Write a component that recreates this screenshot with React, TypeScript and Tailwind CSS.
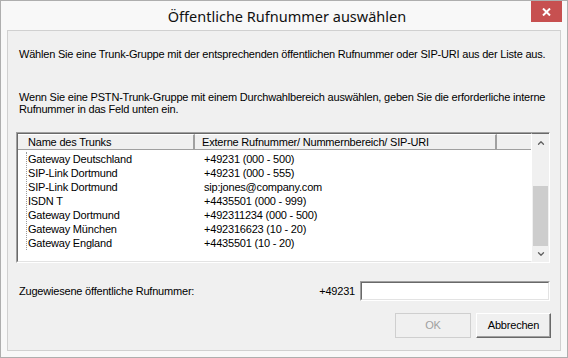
import { ChevronDown, ChevronUp } from "lucide-react";

const trunks = [
  { name: "Gateway Deutschland", number: "+49231 (000 - 500)" },
  { name: "SIP-Link Dortmund", number: "+49231 (000 - 555)" },
  { name: "SIP-Link Dortmund", number: "sip:jones@company.com" },
  { name: "ISDN T", number: "+4435501 (000 - 999)" },
  { name: "Gateway Dortmund", number: "+492311234 (000 - 500)" },
  { name: "Gateway München", number: "+492316623 (10 - 20)" },
  { name: "Gateway England", number: "+4435501 (10 - 20)" },
];

export default function App() {
  return (
    <div className="w-[568px] h-[358px] bg-[#f8f8f8] border border-[#aeaeae] flex flex-col relative font-['Liberation_Sans',Arial,sans-serif] text-[11px] tracking-[-0.2px] text-black overflow-hidden">
      {/* Titelleiste */}
      <div className="h-[29px] flex items-center justify-center">
        <span className="font-['Noto_Sans',sans-serif] text-[14.5px] tracking-normal text-[#111] pl-[6px] pt-[2px]">
          Öffentliche Rufnummer auswählen
        </span>
      </div>
      <div className="absolute top-0 right-[5px] w-[31px] h-[21px] bg-[#c75050] flex items-center justify-center">
        <svg width="9" height="8" viewBox="0 0 9 8">
          <path d="M1 0.5 L8 7.5 M8 0.5 L1 7.5" stroke="white" strokeWidth="2" />
        </svg>
      </div>

      {/* Inhalt */}
      <div className="mx-[6px] h-[321px] bg-[#f0f0f0] border border-[#d0d0d0] flex flex-col">
        <p className="mt-[17px] ml-[11px] leading-[13px] whitespace-nowrap">
          Wählen Sie eine Trunk-Gruppe mit der entsprechenden öffentlichen Rufnummer oder SIP-URI aus der Liste aus.
        </p>
        <p className="mt-[30px] ml-[11px] mr-[6px] leading-[12px]">
          Wenn Sie eine PSTN-Trunk-Gruppe mit einem Durchwahlbereich auswählen, geben Sie die erforderliche interne Rufnummer in das Feld unten ein.
        </p>

        {/* Liste */}
        <div className="mt-[17px] ml-[8px] w-[534px] h-[131px] border border-t-[#a0a0a0] border-l-[#a0a0a0] border-b-white border-r-white flex">
          <div className="flex-1 flex flex-col bg-white border border-t-[#696969] border-l-[#696969] border-b-[#e3e3e3] border-r-transparent">
            <div className="h-[16px] flex bg-[#f0f0f0] border-b border-[#a0a0a0]">
              <div className="w-[177px] pl-[10px] leading-[15px] border-r-2 border-r-[#a0a0a0] border-t border-t-white">
                Name des Trunks
              </div>
              <div className="w-[302px] pl-[7px] leading-[15px] border-r-2 border-r-[#a0a0a0] border-t border-t-white">
                Externe Rufnummer/ Nummernbereich/ SIP-URI
              </div>
              <div className="flex-1 border-t border-t-white" />
            </div>
            <div className="mt-[2px] ml-[8px] flex flex-col border-l border-dotted border-[#9a9a9a] w-fit pr-[2px]">
              {trunks.map((t, i) => (
                <div key={i} className="h-[14px] leading-[14px] flex">
                  <span className="w-[170px] pl-[1px]">{t.name}</span>
                  <span className="pl-[7px]">{t.number}</span>
                </div>
              ))}
            </div>
          </div>
          {/* Scrollleiste */}
          <div className="w-[17px] bg-[#f0f0f0] flex flex-col border-t border-[#696969]">
            <div className="h-[17px] flex items-center justify-center">
              <ChevronUp className="w-[10px] h-[10px] text-[#606060]" strokeWidth={3} />
            </div>
            <div className="h-[35px]" />
            <div className="h-[60px] bg-[#cdcdcd] mx-px" />
            <div className="flex-1 flex items-center justify-center">
              <ChevronDown className="w-[10px] h-[10px] text-[#606060]" strokeWidth={3} />
            </div>
          </div>
        </div>

        {/* Eingabe */}
        <div className="mt-[18px] ml-[11px] flex items-center h-[20px]">
          <span className="flex-1">Zugewiesene öffentliche Rufnummer:</span>
          <span className="mr-[5px]">+49231</span>
          <div className="w-[190px] h-[20px] bg-white border border-t-[#a0a0a0] border-l-[#a0a0a0] border-b-white border-r-white">
            <div className="w-full h-full border border-t-[#696969] border-l-[#696969] border-b-[#e3e3e3] border-r-[#e3e3e3]" />
          </div>
          <div className="w-[10px]" />
        </div>

        {/* Schaltflächen */}
        <div className="mt-[12px] flex justify-end gap-[5px] mr-[9px]">
          <button className="w-[76px] h-[25px] bg-[#f0f0f0] border border-[#cfcfcf] text-[#a0a0a0]">
            OK
          </button>
          <button className="w-[75px] h-[25px] bg-[#f0f0f0] border border-t-white border-l-white border-b-[#696969] border-r-[#696969] shadow-[inset_-1px_-1px_0_#a0a0a0]">
            Abbrechen
          </button>
        </div>
      </div>
    </div>
  );
}
